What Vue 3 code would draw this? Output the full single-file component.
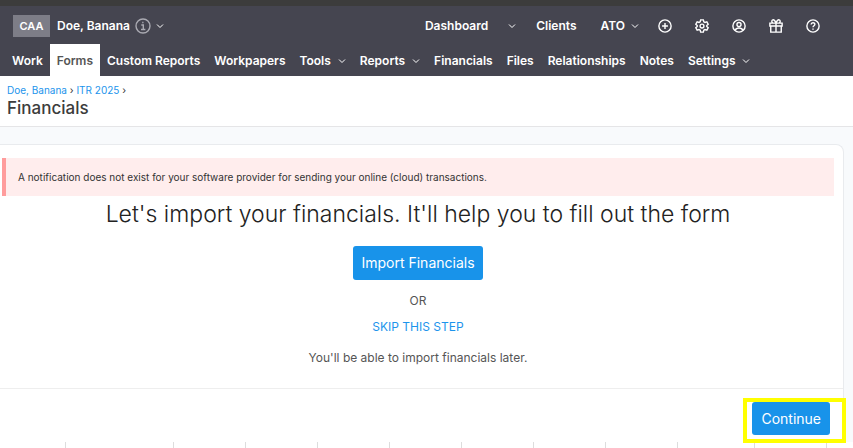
<template>
  <div class="app">
    <header class="header">
      <div class="top-row">
        <button class="badge">CAA</button>
        <button class="client">
          Doe, Banana
          <svg class="info" viewBox="0 0 16 16">
            <circle cx="8" cy="8" r="7" />
            <path d="M6.3 7h2v4.2M6 11.5h4.4M7.2 4.5h1.3" />
          </svg>
          <svg class="chevron" viewBox="0 0 8 8"><path d="M1 2.5l3 3 3-3" /></svg>
        </button>

        <nav class="main-links">
          <a href="#">Dashboard</a>
          <button class="toggle" aria-label="Dashboard menu">
            <svg class="chevron" viewBox="0 0 8 8"><path d="M1 2.5l3 3 3-3" /></svg>
          </button>
          <a href="#" class="clients">Clients</a>
          <button class="ato">
            ATO
            <svg class="chevron" viewBox="0 0 8 8"><path d="M1 2.5l3 3 3-3" /></svg>
          </button>
        </nav>

        <div class="actions">
          <button aria-label="Add">
            <svg viewBox="0 0 24 24"><circle cx="12" cy="12" r="10.5" /><path d="M12 7v10M7 12h10" /></svg>
          </button>
          <button aria-label="Preferences">
            <svg viewBox="0 0 24 24">
              <path d="M9.7 1.5h4.6l.8 3.2 2 1.2 3.2-.9 2.3 4-2.4 2.3v1.4l2.4 2.3-2.3 4-3.2-.9-2 1.2-.8 3.2H9.7l-.8-3.2-2-1.2-3.2.9-2.3-4 2.4-2.3v-1.4L1.4 9l2.3-4 3.2.9 2-1.2z" />
              <circle cx="12" cy="12" r="3.3" />
            </svg>
          </button>
          <button aria-label="Account">
            <svg viewBox="0 0 24 24">
              <circle cx="12" cy="12" r="10.5" />
              <circle cx="12" cy="9.5" r="3.5" />
              <path d="M5.5 19.5c1-3 3.2-4 6.5-4s5.5 1 6.5 4" />
            </svg>
          </button>
          <button aria-label="Rewards">
            <svg viewBox="0 0 24 24">
              <path d="M1.5 7h21v5h-21zM3 12v10.5h18V12M12 7v15.5M12 7C10 2 8 1 6.5 1.5 4 2.5 4.5 6.5 7 7M12 7c2-5 4-6 5.5-5.5C20 2.5 19.5 6.5 17 7" />
            </svg>
          </button>
          <button aria-label="Help">
            <svg viewBox="0 0 24 24">
              <circle cx="12" cy="12" r="10.5" />
              <path d="M8.8 9.5c0-4 6.4-4 6.4-.3 0 2.5-3.2 2.3-3.2 5M12 16.2v2.2" />
            </svg>
          </button>
        </div>
      </div>

      <nav class="tabs">
        <a
          v-for="tab in tabs"
          :key="tab.name"
          href="#"
          class="tab"
          :class="{ active: tab.name === activeTab }"
          @click.prevent="activeTab = tab.name"
        >
          {{ tab.name }}
          <svg v-if="tab.menu" class="chevron" viewBox="0 0 8 8"><path d="M1 2.5l3 3 3-3" /></svg>
        </a>
      </nav>
    </header>

    <div class="page-head">
      <div class="breadcrumbs">
        <a href="#">Doe, Banana</a> › <a href="#">ITR 2025</a> ›
      </div>
      <h1>Financials</h1>
    </div>

    <main class="content">
      <section class="card">
        <div class="alert" role="alert">
          A notification does not exist for your software provider for sending your online (cloud) transactions.
        </div>
        <div class="import">
          <h2>Let's import your financials. It'll help you to fill out the form</h2>
          <button class="btn">Import Financials</button>
          <p class="or">OR</p>
          <a href="#" class="skip">SKIP THIS STEP</a>
          <p class="later">You'll be able to import financials later.</p>
        </div>
        <div class="card-footer">
          <div class="highlight">
            <button class="btn">Continue</button>
          </div>
        </div>
      </section>
    </main>

    <!-- Column dividers below the card -->
    <div class="columns">
      <span
        v-for="(width, i) in columns"
        :key="i"
        class="column"
        :style="{ flexGrow: width }"
      />
    </div>
  </div>
</template>

<script setup>
import {ref} from 'vue';

const activeTab = ref('Forms');

const tabs = [
  {name: 'Work'},
  {name: 'Forms'},
  {name: 'Custom Reports'},
  {name: 'Workpapers'},
  {name: 'Tools', menu: true},
  {name: 'Reports', menu: true},
  {name: 'Financials'},
  {name: 'Files'},
  {name: 'Relationships'},
  {name: 'Notes'},
  {name: 'Settings', menu: true},
];

// Relative column widths
const columns = [66, 108, 72, 72, 72, 72, 72, 72, 72, 77, 72];
</script>

<style>
body {
  margin: 0;
  background: #fff;
}
</style>

<style scoped>
.app {
  font-family: Inter, "Liberation Sans", sans-serif;
  font-size: 12px;
  line-height: 16px;
  color: #333;
}

.app * {
  box-sizing: border-box;
}

a {
  color: #1c94ec;
  text-decoration: none;
}

button {
  padding: 0;
  border: 0;
  background: none;
  color: inherit;
  font: inherit;
  cursor: pointer;
}

svg {
  display: block;
  fill: none;
  stroke: currentColor;
}

.header {
  border-top: 6px solid #3c3c3c;
  background: #454550;
  color: #fff;
  font-weight: 600;
}

.header a {
  color: #fff;
}

.top-row {
  display: flex;
  align-items: center;
  height: 38px;
  padding: 2px 33px 0 13px;
}

.badge {
  width: 37px;
  height: 22px;
  margin-right: 7px;
  background: #7d7d87;
  font-size: 11px;
}

.client {
  display: flex;
  align-items: center;
  gap: 5px;
}

.info {
  width: 16px;
  height: 16px;
  color: #aaaab2;
  stroke-width: 1.4;
}

.chevron {
  width: 8px;
  height: 8px;
  stroke-width: 1;
}

.main-links {
  display: flex;
  align-items: center;
  margin-left: auto;
}

.toggle {
  margin: 0 20px;
}

.clients {
  margin-right: 24px;
}

.ato {
  display: flex;
  align-items: center;
  gap: 6px;
}

.actions {
  display: flex;
  gap: 23px;
  margin-left: 19px;
}

.actions svg {
  width: 14px;
  height: 14px;
  stroke-width: 2.4;
}

.tabs {
  display: flex;
  padding-left: 5px;
}

.tab {
  display: flex;
  align-items: center;
  gap: 7px;
  height: 32px;
  padding: 2px 7px 0;
  white-space: nowrap;
}

.header .tab.active {
  background: #fff;
  color: #555;
}

.page-head {
  height: 51px;
  padding: 6px 7px 0;
  border-bottom: 1px solid #e5e5e7;
}

.breadcrumbs {
  font-size: 10px;
}

h1 {
  margin: 0;
  font-size: 17px;
  font-weight: 500;
  line-height: 20px;
  color: #3c3c3c;
}

.content {
  padding: 17px 9px 0 0;
  background: #f8fafc;
}

.card {
  border: 1px solid #e9ebee;
  border-width: 1px 1px 0 0;
  border-radius: 0 8px 0 0;
  background: #fff;
}

.alert {
  margin: 13px 9px 0 2px;
  padding: 11px 12px;
  border-left: 4px solid #ff9c9c;
  background: #ffeded;
  font-size: 10px;
}

.import {
  display: flex;
  flex-direction: column;
  align-items: center;
  padding: 2px 7px 22px 0;
  color: #555;
}

h2 {
  margin: 0 0 16px;
  font-size: 23px;
  font-weight: 300;
  line-height: 32px;
  color: #222;
}

.btn {
  height: 34px;
  padding: 0 8px;
  border-radius: 3px;
  background: #1893ea;
  color: #fff;
  font-size: 14px;
}

.or {
  margin: 13px 0 10px;
}

.later {
  margin: 15px 0 0;
}

.card-footer {
  position: relative;
  height: 54px;
  border-top: 1px solid #eee;
}

.highlight {
  position: absolute;
  top: 9px;
  right: -3px;
  padding: 0 12px 4px 5px;
  border: 4px solid #ff0;
}

.highlight .btn {
  display: block;
  height: 33px;
  padding: 0 9px;
}

.columns {
  display: flex;
  height: 6px;
  padding-right: 26px;
}

.column {
  flex-basis: 0;
  border-right: 1px solid #ddd;
}
</style>
